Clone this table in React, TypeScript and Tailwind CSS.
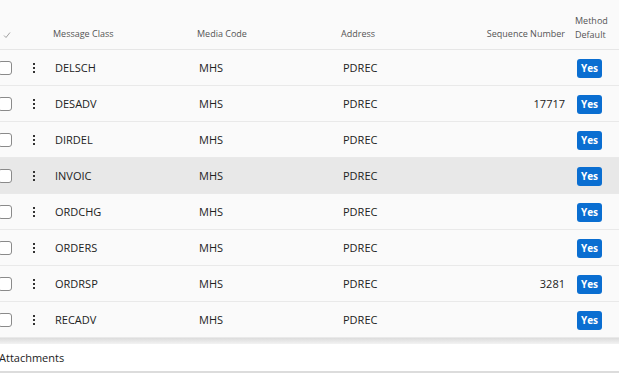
import React from 'react';

const rows = [
  { cls: 'DELSCH', media: 'MHS', addr: 'PDREC', seq: '' },
  { cls: 'DESADV', media: 'MHS', addr: 'PDREC', seq: '17717' },
  { cls: 'DIRDEL', media: 'MHS', addr: 'PDREC', seq: '' },
  { cls: 'INVOIC', media: 'MHS', addr: 'PDREC', seq: '', active: true },
  { cls: 'ORDCHG', media: 'MHS', addr: 'PDREC', seq: '' },
  { cls: 'ORDERS', media: 'MHS', addr: 'PDREC', seq: '' },
  { cls: 'ORDRSP', media: 'MHS', addr: 'PDREC', seq: '3281' },
  { cls: 'RECADV', media: 'MHS', addr: 'PDREC', seq: '' },
];

const cols = 'grid grid-cols-[24px_31px_144px_144px_122px_110px_44px]';

function Kebab() {
  return (
    <div className="flex flex-col items-center gap-[2px] w-[4px]">
      <span className="block w-[2px] h-[2px] bg-[#333]" />
      <span className="block w-[2px] h-[2px] bg-[#333]" />
      <span className="block w-[2px] h-[2px] bg-[#333]" />
    </div>
  );
}

export default function App() {
  return (
    <div className="w-[619px] h-[374px] overflow-hidden bg-white text-[#222]" style={{ fontFamily: '"Open Sans", "Segoe UI", sans-serif' }}>
      {/* Table */}
      <div className="bg-[#fafafa]">
        <div className={`${cols} h-[50px] items-end pb-[8px] border-b border-[#e6e6e6] text-[9px] text-[#555] leading-[14px]`}>
          <div className="pl-[3px]">
            <svg width="8" height="8" viewBox="0 0 8 8" className="mb-[2px]">
              <path d="M1 4.5 L3 6.5 L7 1.5" stroke="#888" strokeWidth="0.8" fill="none" />
            </svg>
          </div>
          <div />
          <div className="-ml-[2px]">Message Class</div>
          <div className="-ml-[2px]">Media Code</div>
          <div className="-ml-[2px]">Address</div>
          <div className="text-right pr-[10px]">Sequence Number</div>
          <div className="leading-[14px] -mb-[1px]">Method<br />Default</div>
        </div>
        {rows.map((r) => (
          <div
            key={r.cls}
            className={`${cols} h-[36px] items-center pt-[1px] border-b border-[#e9e9e9] text-[11px] ${r.active ? 'bg-[#e8e8e8]' : ''}`}
          >
            <div className="-ml-[2px]">
              <div className="w-[14px] h-[14px] rounded-[3px] border border-[#8a8a8a] bg-white" />
            </div>
            <div className="pl-[8px]"><Kebab /></div>
            <div>{r.cls}</div>
            <div>{r.media}</div>
            <div>{r.addr}</div>
            <div className="text-right pr-[10px]">{r.seq}</div>
            <div className="pl-[2px]">
              <span className="inline-flex items-center justify-center w-[25px] h-[19px] rounded-[3px] bg-[#0a6ed1] text-white text-[10px] font-bold">Yes</span>
            </div>
          </div>
        ))}
      </div>
      <div className="h-[6px] bg-gradient-to-b from-[#dcdcdc] to-[#f3f3f3]" />
      <div className="h-[29px] flex items-center pt-[2px] border-b-2 border-[#dcdcdc] -ml-[1px] text-[11px] text-[#222]">
        Attachments
      </div>
    </div>
  );
}
